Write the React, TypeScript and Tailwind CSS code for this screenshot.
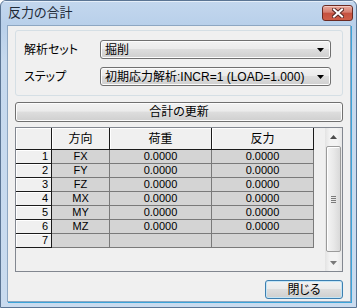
import React from 'react';

interface Row {
  no: number;
  dir: string;
  load: string;
  react: string;
}

const rows: Row[] = [
  { no: 1, dir: 'FX', load: '0.0000', react: '0.0000' },
  { no: 2, dir: 'FY', load: '0.0000', react: '0.0000' },
  { no: 3, dir: 'FZ', load: '0.0000', react: '0.0000' },
  { no: 4, dir: 'MX', load: '0.0000', react: '0.0000' },
  { no: 5, dir: 'MY', load: '0.0000', react: '0.0000' },
  { no: 6, dir: 'MZ', load: '0.0000', react: '0.0000' },
  { no: 7, dir: '', load: '', react: '' },
];

const DropArrow = () => (
  <svg width="7" height="4" viewBox="0 0 7 4" className="shrink-0">
    <polygon points="0,0 7,0 3.5,4" fill="#000" />
  </svg>
);

const Combo: React.FC<{ value: string }> = ({ value }) => (
  <div className="w-[231px] h-[19px] flex items-center pl-[4px] pr-[6px] border border-[#707070] rounded-[3px] bg-[linear-gradient(to_bottom,#f2f2f2_0%,#ebebeb_45%,#dddddd_50%,#cfcfcf_100%)] shadow-[inset_0_0_0_1px_#fcfcfc]">
    <span className="flex-1 truncate">{value}</span>
    <DropArrow />
  </div>
);

const Scrollbar = () => (
  <div className="w-[17px] h-full flex flex-col bg-[linear-gradient(to_right,#e3e3e3,#f3f3f3_30%,#f3f3f3_70%,#e8e8e8)]">
    <div className="h-[17px] flex items-center justify-center">
      <svg width="7" height="4" viewBox="0 0 7 4">
        <polygon points="3.5,0 7,4 0,4" fill="#4d4d4d" />
      </svg>
    </div>
    <div className="mx-[1px] h-[106px] mt-[1px] border border-[#9b9b9b] rounded-[2px] bg-[linear-gradient(to_right,#f4f4f4,#e9e9e9_50%,#d9d9d9)] shadow-[inset_1px_1px_0_#fff] flex items-center justify-center">
      <div className="flex flex-col gap-[1px]">
        <div className="w-[5px] h-[1px] bg-[#7a7a7a]" />
        <div className="w-[5px] h-[1px] bg-[#7a7a7a]" />
        <div className="w-[5px] h-[1px] bg-[#7a7a7a]" />
        <div className="w-[5px] h-[1px] bg-[#7a7a7a]" />
      </div>
    </div>
    <div className="flex-1" />
    <div className="h-[17px] flex items-center justify-center">
      <svg width="7" height="4" viewBox="0 0 7 4">
        <polygon points="0,0 7,0 3.5,4" fill="#7a7a7a" />
      </svg>
    </div>
  </div>
);

export default function App() {
  return (
    <div className="w-[357px] h-[308px] flex flex-col border border-[#5b7594] rounded-t-[6px] overflow-hidden bg-[linear-gradient(to_bottom,#c3d7ee_0px,#b9d0ea_24px,#c6d9ee_60px,#c9dbef_100%)] text-[12px] text-black [font-family:'Liberation_Sans','Noto_Sans_CJK_JP',sans-serif] [font-feature-settings:'palt']">
      {/* title bar */}
      <div className="h-[24px] shrink-0 flex items-start pl-[7px] pr-[3px] shadow-[inset_0_1px_0_#e4eef9]">
        <span className="mt-[4px] text-[13px] leading-[16px] text-[#1e2a38]">反力の合計</span>
        <div className="ml-auto mt-[4px] w-[31px] h-[16px] rounded-[3px] border border-[#6b2a22] bg-[linear-gradient(to_bottom,#e8a89c_0%,#d67e6f_45%,#c4503f_50%,#cf5e48_100%)] shadow-[inset_0_1px_0_#f3c9c1] flex items-center justify-center">
          <svg width="12" height="10" viewBox="0 0 12 10">
            <path d="M2 1.5 L10 8.5 M10 1.5 L2 8.5" stroke="#5a2a26" strokeWidth="4" strokeLinecap="square" />
            <path d="M2 1.5 L10 8.5 M10 1.5 L2 8.5" stroke="#fff" strokeWidth="2" strokeLinecap="square" />
          </svg>
        </div>
      </div>

      {/* client area */}
      <div className="flex-1 ml-[6px] mr-[5px] mb-[5px] border border-[#8ea7c2] bg-[#f0f0f0] flex flex-col px-[7px] pt-[4px] shadow-[1px_1px_0_#3ba4d9]">
        <div className="h-[66px] border border-[#d5dfe5] rounded-[3px] flex flex-col gap-[8px] pt-[9px] pl-[8px] pr-[10px]">
          <div className="flex items-center">
            <span className="w-[76px]">解析セット</span>
            <Combo value="掘削" />
          </div>
          <div className="flex items-center">
            <span className="w-[76px]">ステップ</span>
            <Combo value="初期応力解析:INCR=1 (LOAD=1.000)" />
          </div>
        </div>

        <button className="mt-[6px] h-[20px] w-full border border-[#707070] rounded-[3px] bg-[linear-gradient(to_bottom,#f2f2f2_0%,#ebebeb_45%,#dddddd_50%,#cfcfcf_100%)] shadow-[inset_0_0_0_1px_#fcfcfc] flex items-center justify-center">
          合計の更新
        </button>

        <div className="mt-[5px] h-[145px] border border-[#828790] bg-[#f0f0f0] flex text-[11px]">
          <div className="flex-1 flex flex-col">
            <div className="grid grid-cols-[36px_58px_102px_102px] h-[22px]">
              <div className="border-r border-b border-[#1a1a1a] bg-[#f0f0f0] shadow-[inset_1px_1px_0_#fff]" />
              {['方向', '荷重', '反力'].map((h) => (
                <div
                  key={h}
                  className="border-r border-b border-[#1a1a1a] bg-[#f0f0f0] shadow-[inset_1px_1px_0_#fff] flex items-center justify-center text-[12px]"
                >
                  {h}
                </div>
              ))}
            </div>
            {rows.map((r) => (
              <div key={r.no} className="grid grid-cols-[36px_58px_102px_102px] h-[14px] leading-[13px]">
                <div className="border-r border-b border-[#1a1a1a] bg-[#f0f0f0] shadow-[inset_1px_1px_0_#fff] text-right pr-[3px]">
                  {r.no}
                </div>
                <div className="border-r border-b border-[#7a7a7a] bg-[#d4d4d4] text-center">{r.dir}</div>
                <div className="border-r border-b border-[#7a7a7a] bg-[#d4d4d4] text-center">{r.load}</div>
                <div className="border-r border-b border-[#7a7a7a] bg-[#d4d4d4] text-center">{r.react}</div>
              </div>
            ))}
          </div>
          <Scrollbar />
        </div>

        <div className="mt-[8px] flex justify-end">
          <button className="w-[78px] h-[19px] border border-[#3c7fb1] rounded-[3px] bg-[linear-gradient(to_bottom,#f2f2f2_0%,#ebebeb_45%,#dddddd_50%,#cfcfcf_100%)] shadow-[inset_0_0_0_1px_#c4e5f6] flex items-center justify-center">
            閉じる
          </button>
        </div>
      </div>
    </div>
  );
}
